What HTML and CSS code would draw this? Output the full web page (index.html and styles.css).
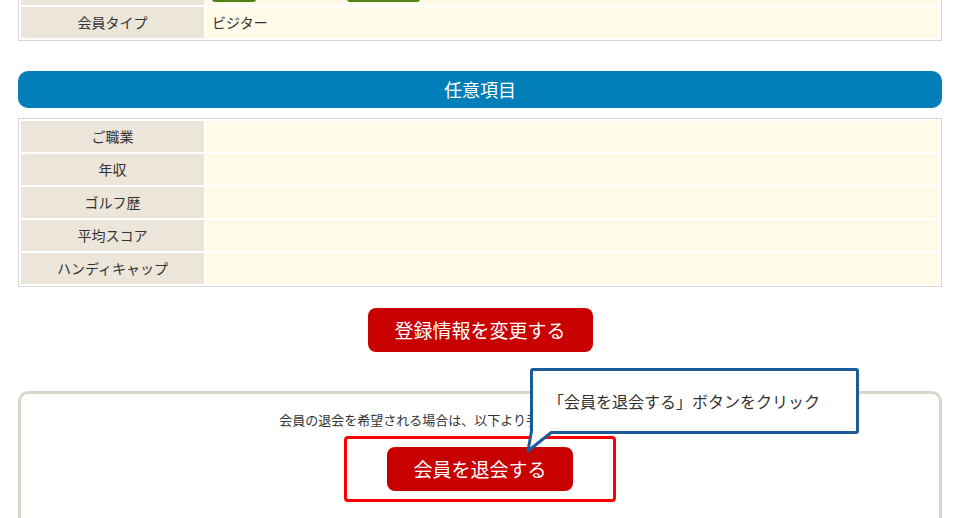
FILE: index.html
```html
<!DOCTYPE html>
<html lang="ja">
<head>
    <meta charset="UTF-8">
    <title>会員情報</title>
    <link rel="stylesheet" href="styles.css">
</head>
<body>

<div class="page">
    <table class="info-table">
        <tr>
            <th></th>
            <td><span class="opt"></span><span class="opt opt-wide"></span></td>
        </tr>
        <tr>
            <th>会員タイプ</th>
            <td>ビジター</td>
        </tr>
    </table>

    <h2 class="section-title">任意項目</h2>
    <table class="info-table">
        <tr><th>ご職業</th><td></td></tr>
        <tr><th>年収</th><td></td></tr>
        <tr><th>ゴルフ歴</th><td></td></tr>
        <tr><th>平均スコア</th><td></td></tr>
        <tr><th>ハンディキャップ</th><td></td></tr>
    </table>

    <div class="btn-row">
        <a class="btn-red btn-edit" href="#">登録情報を変更する</a>
    </div>

    <div class="withdraw-box">
        <p class="withdraw-text">会員の退会を希望される場合は、以下より手続きを行ってください。</p>
        <div class="highlight">
            <a class="btn-red btn-withdraw" href="#">会員を退会する</a>
        </div>

        <!-- 操作説明の吹き出し -->
        <div class="callout">
            「会員を退会する」ボタンをクリック
            <svg class="callout-tail" width="34" height="24" viewBox="0 0 34 24">
                <path d="M7.5 0 L4 20 L29 0 Z" fill="#fff"/>
                <path d="M7.5 0 L4 20 L29 0" fill="none" stroke="#1d5b98" stroke-width="3" stroke-linejoin="round"/>
            </svg>
        </div>
    </div>
</div>

</body>
</html>
```

FILE: styles.css
```css
body {
    margin: 0;
    font-family: "Noto Sans CJK JP", "Noto Sans", sans-serif;
    color: #333;
    background: #fff;
}

.page {
    margin-top: -29px;
    padding: 0 18px;
}

.info-table {
    width: 100%;
    border: 1px solid #d6d6d6;
    border-collapse: separate;
    border-spacing: 2px;
    font-size: 14px;
}

.info-table th,
.info-table td {
    height: 29px;
    padding: 0 0 2px;
    vertical-align: middle;
    line-height: 28px;
}

.info-table th {
    width: 183px;
    background-color: #ebe5da;
    font-weight: normal;
    text-align: center;
}

.info-table td {
    background-color: #fffbe8;
    padding-left: 6px;
}

.opt {
    display: inline-block;
    vertical-align: middle;
    width: 44px;
    height: 22px;
    margin-top: -2px;
    border-radius: 3px;
    background-color: #6aa51f;
    border-bottom: 2px solid #4d8412;
}

.opt-wide {
    width: 73px;
    margin-left: 91px;
}

.section-title {
    margin: 30px 0 10px;
    height: 37px;
    line-height: 37px;
    border-radius: 10px;
    background-color: #027fb8;
    color: #fff;
    font-size: 18px;
    font-weight: normal;
    text-align: center;
}

.btn-row {
    margin-top: 21px;
    text-align: center;
}

.btn-red {
    display: inline-block;
    height: 44px;
    line-height: 44px;
    border-radius: 8px;
    background-color: #c90000;
    color: #fff;
    font-size: 19px;
    text-decoration: none;
}

.btn-edit {
    width: 225px;
}

.btn-withdraw {
    width: 186px;
}

.withdraw-box {
    position: relative;
    margin-top: 39px;
    height: 160px;
    border: 3px solid #dcd5c9;
    border-radius: 10px;
    text-align: center;
}

.withdraw-text {
    margin: 16px 0 0;
    font-size: 13px;
    line-height: 20px;
}

.highlight {
    display: inline-block;
    margin-top: 6px;
    padding: 8px 40px;
    border: 3px solid #ff0000;
    border-radius: 4px;
}

.callout {
    position: absolute;
    top: -26px;
    left: 509px;
    width: 308px;
    height: 60px;
    padding-left: 15px;
    border: 3px solid #1d5b98;
    border-radius: 3px;
    background: #fff;
    font-size: 16px;
    line-height: 60px;
    text-align: left;
}

.callout-tail {
    position: absolute;
    left: -9px;
    top: 100%;
}
```
